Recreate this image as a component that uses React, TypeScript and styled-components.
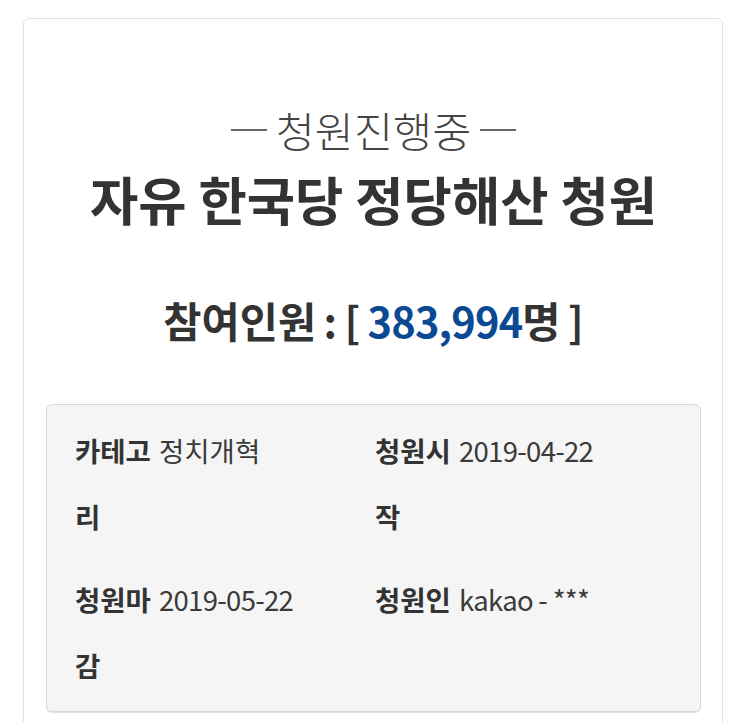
import React from "react";
import styled, { createGlobalStyle } from "styled-components";

const Global = createGlobalStyle`
  html, body { margin: 0; padding: 0; background: #ffffff; }
  body { font-family: "Noto Sans CJK KR", "Noto Sans", sans-serif; color: #333; }
  * { box-sizing: border-box; }
`;

const Card = styled.section`
  margin: 18px 20px 0 23px;
  width: 700px;
  min-height: 760px;
  border: 1px solid #e2e2e2;
  border-radius: 6px;
  padding: 86px 21px 40px 22px;
  background: #fff;
`;

const Status = styled.div`
  display: flex;
  align-items: center;
  justify-content: center;
  gap: 9px;
  font-size: 42.5px;
  font-weight: 300;
  line-height: 50px;
  color: #444;
`;

const Dash = styled.span`
  display: block;
  width: 36px;
  height: 2px;
  background: #666;
`;

const Title = styled.h1`
  margin: 13px 0 0;
  text-align: center;
  font-size: 52.5px;
  font-weight: 700;
  line-height: 60px;
  color: #333;
`;

const Count = styled.div`
  margin-top: 67px;
  text-align: center;
  font-size: 41.5px;
  font-weight: 700;
  line-height: 50px;
  color: #333;
  word-spacing: -2px;
`;

const Num = styled.span`
  color: #0b4a92;
  letter-spacing: -0.8px;
`;

const InfoBox = styled.div`
  margin-top: 59px;
  background: #f5f5f5;
  border: 1px solid #dadada;
  border-radius: 6px;
  box-shadow: 0 1px 1px rgba(0, 0, 0, 0.12);
  padding: 12px 20px 13px 28px;
  display: grid;
  grid-template-columns: 300px 1fr;
  row-gap: 17px;
`;

const Item = styled.div`
  display: flex;
  align-items: flex-start;
  font-size: 27.5px;
  line-height: 66px;
  color: #333;
`;

const Label = styled.span`
  flex: 0 0 84px;
  width: 84px;
  font-weight: 700;
  word-break: break-all;
`;

const Value = styled.span<{ $latin?: boolean }>`
  font-weight: 400;
  color: #3a3a3a;
  white-space: nowrap;
  letter-spacing: ${(p) => (p.$latin ? "-0.7px" : "0")};
`;

const items = [
  { label: "카테고리", value: "정치개혁", latin: false },
  { label: "청원시작", value: "2019-04-22", latin: true },
  { label: "청원마감", value: "2019-05-22", latin: true },
  { label: "청원인", value: "kakao - ***", latin: true },
];

export default function App() {
  return (
    <>
      <Global />
      <Card>
        <Status>
          <Dash />
          청원진행중
          <Dash />
        </Status>
        <Title>자유 한국당 정당해산 청원</Title>
        <Count>
          참여인원 : [ <Num>383,994</Num>명 ]
        </Count>
        <InfoBox>
          {items.map((it) => (
            <Item key={it.label}>
              <Label>{it.label}</Label>
              <Value $latin={it.latin}>{it.value}</Value>
            </Item>
          ))}
        </InfoBox>
      </Card>
    </>
  );
}
